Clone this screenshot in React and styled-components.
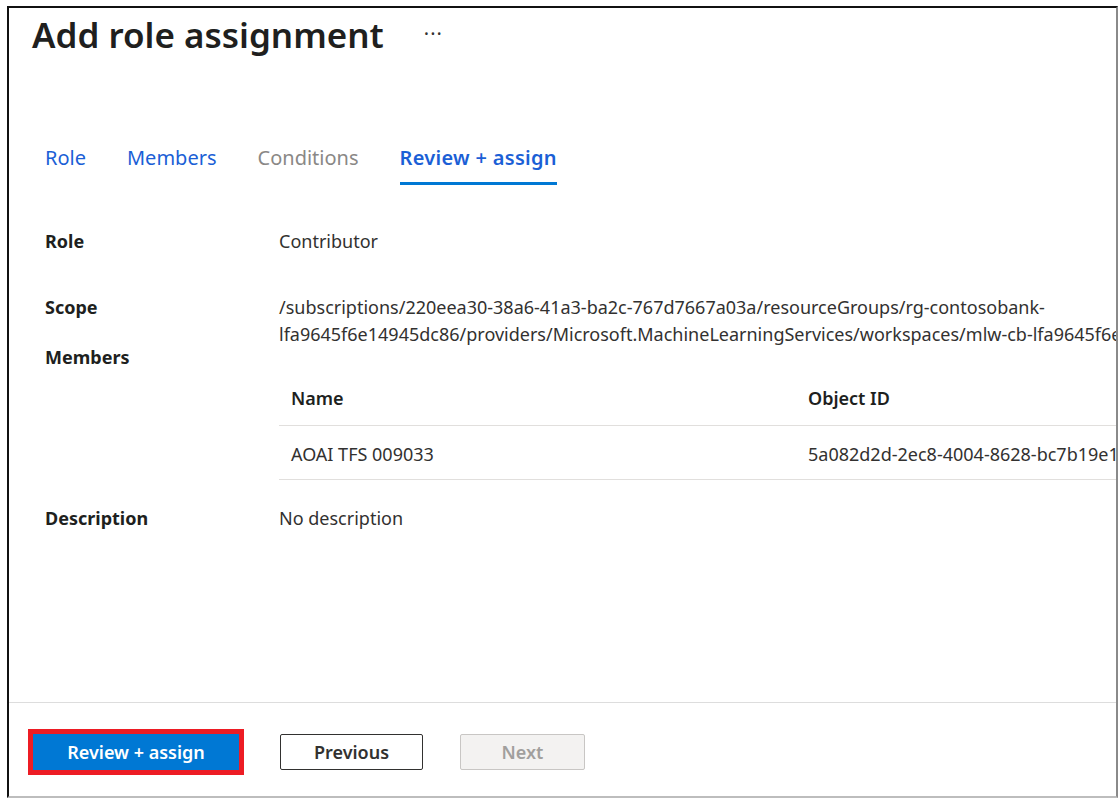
import React from "react";
import styled, { createGlobalStyle } from "styled-components";

const GlobalStyle = createGlobalStyle`
  html, body {
    margin: 0;
    padding: 0;
    background: #ffffff;
  }
  body {
    font-family: "Noto Sans", "Open Sans", sans-serif;
    color: #323130;
  }
`;

const Frame = styled.div`
  box-sizing: border-box;
  margin: 6px 0 0 7px;
  width: 1111px;
  height: 792px;
  border-top: 2px solid #111111;
  border-left: 2px solid #111111;
  border-right: 2px solid #8a8a8a;
  border-bottom: 2px solid #bdbdbd;
  overflow: hidden;
  display: flex;
  flex-direction: column;
`;

const Header = styled.div`
  display: flex;
  align-items: center;
  gap: 40px;
  padding: 4px 0 0 23px;
`;

const Title = styled.h1`
  margin: 0;
  font-size: 35px;
  line-height: 46px;
  font-weight: 600;
  color: #201f1e;
`;

const More = styled.button`
  border: none;
  background: none;
  padding: 0;
  font-family: inherit;
  font-size: 20px;
  line-height: 20px;
  color: #323130;
  letter-spacing: 1px;
  margin-top: -2px;
`;

const Tabs = styled.nav`
  display: flex;
  gap: 41px;
  margin: 86px 0 0 36px;
`;

const Tab = styled.div`
  font-size: 20px;
  line-height: 28px;
  padding-bottom: 10px;
  border-bottom: 3px solid ${(p) => (p.active ? "#0078d4" : "transparent")};
  color: ${(p) => (p.disabled ? "#8a8886" : "#1b5fd6")};
  font-weight: ${(p) => (p.active ? 600 : 400)};
  letter-spacing: ${(p) => (p.active ? "0.3px" : "0")};
`;

const Details = styled.div`
  margin: 43px 0 0 36px;
`;

const Row = styled.div`
  display: grid;
  grid-template-columns: 234px 1fr;
  margin-top: ${(p) => p.mt || 0}px;
  font-size: 18px;
  line-height: 27px;
`;

const Label = styled.div`
  font-weight: 700;
  color: #201f1e;
`;

const Value = styled.div`
  color: #323130;
  white-space: nowrap;
`;

const Table = styled.div`
  display: flex;
  flex-direction: column;
  width: 1000px;
`;

const TableRow = styled.div`
  display: grid;
  grid-template-columns: 517px 1fr;
  padding: ${(p) => (p.head ? "41px 12px 13px" : "15px 12px 11px")};
  border-bottom: 1px solid #e1dfdd;
  font-weight: ${(p) => (p.head ? 600 : 400)};
  color: ${(p) => (p.head ? "#201f1e" : "#323130")};
`;

const Spacer = styled.div`
  flex: 1;
`;

const Footer = styled.div`
  display: flex;
  align-items: flex-start;
  border-top: 1px solid #dddddd;
  padding: 31px 0 0 24px;
  height: 94px;
  box-sizing: border-box;
`;

const Button = styled.button`
  box-sizing: border-box;
  height: 36px;
  padding: 0;
  width: ${(p) => p.w}px;
  margin-right: ${(p) => p.mr || 0}px;
  font-family: inherit;
  font-size: 18px;
  font-weight: 600;
  border-radius: 2px;
  border: 1px solid;
  ${(p) =>
    p.variant === "primary" &&
    `
    background: #0078d4;
    border-color: #0078d4;
    color: #ffffff;
    outline: 5px solid #ed1c24;
    border-radius: 0;
  `}
  ${(p) =>
    p.variant === "default" &&
    `
    background: #ffffff;
    border-color: #323130;
    color: #323130;
  `}
  ${(p) =>
    p.variant === "disabled" &&
    `
    background: #f3f2f1;
    border-color: #c8c6c4;
    color: #a19f9d;
  `}
`;

export default function App() {
  return (
    <>
      <GlobalStyle />
      <Frame>
        <Header>
          <Title>Add role assignment</Title>
          <More>···</More>
        </Header>

        <Tabs>
          <Tab>Role</Tab>
          <Tab>Members</Tab>
          <Tab disabled>Conditions</Tab>
          <Tab active>Review + assign</Tab>
        </Tabs>

        <Details>
          <Row>
            <Label>Role</Label>
            <Value>Contributor</Value>
          </Row>
          <Row mt={39}>
            <Label>Scope</Label>
            <Value>
              /subscriptions/220eea30-38a6-41a3-ba2c-767d7667a03a/resourceGroups/rg-contosobank-
              <br />
              lfa9645f6e14945dc86/providers/Microsoft.MachineLearningServices/workspaces/mlw-cb-lfa9645f6e14945dc86
            </Value>
          </Row>
          <Row mt={-4}>
            <Label>Members</Label>
            <Table>
              <TableRow head>
                <span>Name</span>
                <span>Object ID</span>
              </TableRow>
              <TableRow>
                <span>AOAI TFS 009033</span>
                <span>5a082d2d-2ec8-4004-8628-bc7b19e1f3a2</span>
              </TableRow>
            </Table>
          </Row>
          <Row mt={25}>
            <Label>Description</Label>
            <Value>No description</Value>
          </Row>
        </Details>

        <Spacer />

        <Footer>
          <Button variant="primary" w={206} mr={41}>
            Review + assign
          </Button>
          <Button variant="default" w={143} mr={37}>
            Previous
          </Button>
          <Button variant="disabled" w={125}>
            Next
          </Button>
        </Footer>
      </Frame>
    </>
  );
}
